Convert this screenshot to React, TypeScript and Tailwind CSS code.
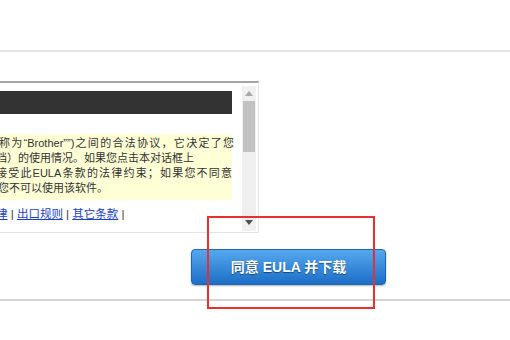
export default function App() {
  return (
    <div
      className="relative w-[510px] h-[340px] overflow-hidden bg-white"
      style={{ fontFamily: '"Liberation Sans", "Noto Sans CJK SC", sans-serif' }}
    >
      <div className="pt-[50px]">
        <div className="h-[2px] bg-[#e6e6e6]" />
      </div>

      {/* EULA text box */}
      <div className="mt-[29px] flex w-[259px] h-[152px] border-t-2 border-r border-b border-t-[#a5a5a5] border-r-[#e3e3e3] border-b-[#e3e3e3]">
        <div className="flex-1 overflow-hidden pt-[8px] pr-[10px]">
          <div className="h-[23px] bg-[#333333]" />
          <div className="mt-[20px] h-[66px] bg-[#ffffd6] pt-[2px] text-[11px] leading-[15px] text-[#333]">
            <div className="-ml-[1px] w-[235px] [text-align-last:justify]">称为“Brother””)之间的合法协议，它决定了您</div>
            <div className="whitespace-nowrap -ml-[4px]">档）的使用情况。如果您点击本对话框上</div>
            <div className="-ml-[4px] w-[236px] [text-align-last:justify]">接受此EULA条款的法律约束；如果您不同意</div>
            <div className="whitespace-nowrap -ml-[2px]">您不可以使用该软件。</div>
          </div>
          <div className="mt-[7px] whitespace-nowrap -ml-[4px] text-[11.5px] leading-[15px] text-[#333]">
            <span className="text-[#1a3fc4] underline">律</span> | <span className="text-[#1a3fc4] underline">出口规则</span> | <span className="text-[#1a3fc4] underline">其它条款</span> |
          </div>
        </div>
        <div className="mt-[3px] mb-[1px] mr-[2px] flex w-[14px] flex-col items-center bg-[#f0f0f0]">
          <svg width="8" height="5" viewBox="0 0 8 5" className="mt-[5px]">
            <polygon points="4,0 8,5 0,5" fill="#a8a8a8" />
          </svg>
          <div className="mt-[5px] h-[51px] w-[12px] bg-[#c2c2c2]" />
          <div className="flex-1" />
          <svg width="8" height="5" viewBox="0 0 8 5" className="mb-[6px]">
            <polygon points="0,0 8,0 4,5" fill="#505050" />
          </svg>
        </div>
      </div>

      {/* Download button */}
      <div className="mt-[16px] pl-[191px]">
        <button className="flex h-[36px] w-[195px] items-center justify-center rounded-[4px] border border-[#1d66b5] bg-gradient-to-b from-[#55a8ee] to-[#1a6ec6] text-[14px] font-bold text-white shadow-[0_1px_2px_rgba(0,0,0,0.3)] [text-shadow:0_1px_1px_rgba(0,0,0,0.45)]">
          同意 EULA 并下载
        </button>
      </div>

      <div className="mt-[14px] h-[2px] bg-[#d4d4d4]" />

      {/* red annotation box */}
      <div className="absolute left-[207px] top-[216px] h-[93px] w-[168px] border-2 border-[#e8302e]" />
    </div>
  );
}
